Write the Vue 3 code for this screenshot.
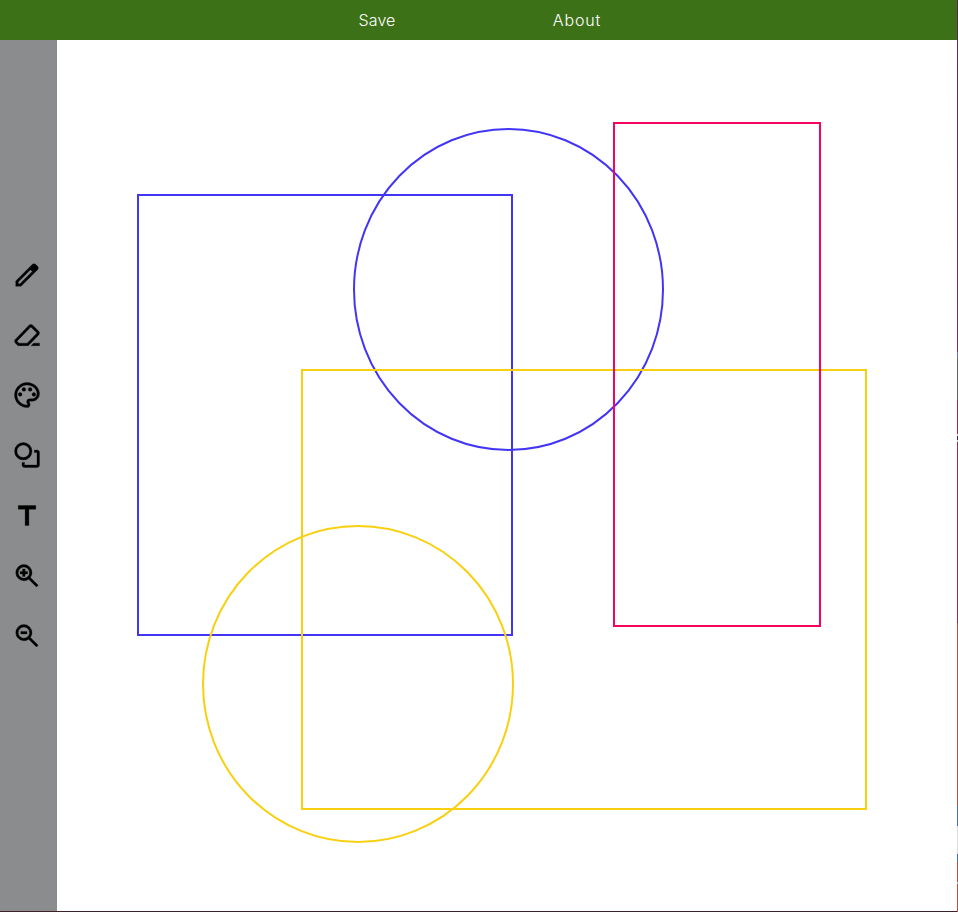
<script setup>
const tools = [
  { name: 'pencil', box: '0 0 24 24', d: 'M5 19h1.425L16.2 9.225 14.775 7.8 5 17.575zm-2 2v-4.25L16.2 3.575q.3-.275.663-.425t.762-.15.775.15.65.45L20.425 5q.3.275.438.65T21 6.4q0 .4-.137.763t-.438.662L7.25 21z' },
  { name: 'eraser', box: '0 -980 960 960', d: 'M690-240h190v80H610l80-80Zm-500 80-85-85q-23-23-23.500-57t22.500-58l440-456q23-24 56.500-24t56.500 23l199 199q23 23 23 57t-23 57L520-160H190Zm296-80 314-322-198-198-442 456 64 64h262Z' },
  { name: 'palette', box: '0 0 24 24', d: 'M12 22C6.49 22 2 17.51 2 12S6.49 2 12 2s10 4.04 10 9c0 3.31-2.69 6-6 6h-1.77c-.28 0-.5.22-.5.5 0 .12.05.23.13.33.41.47.64 1.06.64 1.67A2.5 2.5 0 0 1 12 22zm0-18c-4.41 0-8 3.59-8 8s3.59 8 8 8c.28 0 .5-.22.5-.5a.54.54 0 0 0-.14-.35c-.41-.46-.63-1.05-.63-1.65a2.5 2.5 0 0 1 2.5-2.500H16c2.21 0 4-1.79 4-4 0-3.86-3.59-7-8-7zM5 11.500a1.500 1.500 0 1 0 3 0a1.500 1.500 0 1 0-3 0zM8 7.500a1.500 1.500 0 1 0 3 0a1.500 1.500 0 1 0-3 0zM13 7.500a1.500 1.500 0 1 0 3 0a1.500 1.500 0 1 0-3 0zM16 11.500a1.500 1.500 0 1 0 3 0a1.500 1.500 0 1 0-3 0z' },
  { name: 'shapes', box: '0 0 24 24', d: 'M9 2a7 7 0 1 0 0 14a7 7 0 0 0 0-14zM9 4a5 5 0 1 1 0 10a5 5 0 0 1 0-10zM17.900 8H20q.825 0 1.413.588T22 10v10q0 .825-.587 1.413T20 22H10q-.825 0-1.412-.587T8 20v-2.100h2V20h10V10h-2.100z' },
  { name: 'text', box: '0 -0.4 24 24', d: 'M10.500 20V7H5V4h14v3h-5.500v13z' },
  { name: 'zoom-in', box: '0 -0.6 24 24', d: 'm19.600 21-6.300-6.300A6.100 6.100 0 0 1 9.500 16 6.500 6.500 0 1 1 16 9.500a6.100 6.100 0 0 1-1.300 3.800l6.300 6.300zM9.500 14a4.500 4.500 0 1 0 0-9 4.500 4.500 0 0 0 0 9zM8.500 12.500v-2h-2v-2h2v-2h2v2h2v2h-2v2z' },
  { name: 'zoom-out', box: '0 -0.6 24 24', d: 'm19.600 21-6.300-6.300A6.100 6.100 0 0 1 9.500 16 6.500 6.500 0 1 1 16 9.500a6.100 6.100 0 0 1-1.300 3.800l6.300 6.300zM9.500 14a4.500 4.500 0 1 0 0-9 4.500 4.500 0 0 0 0 9zM7 10.500v-2h5v2z' }
]
</script>

<template>
  <div class="app">
    <div class="window">
      <nav class="menu">
        <a class="menu-item save">Save</a>
        <a class="menu-item about">About</a>
      </nav>
      <div class="workspace">
        <aside class="toolbar">
          <button v-for="tool in tools" :key="tool.name" class="tool">
            <svg class="icon" :viewBox="tool.box"><path fill-rule="evenodd" :d="tool.d" /></svg>
          </button>
        </aside>
        <svg class="canvas" viewBox="57 40 900 871" fill="none" stroke-width="2">
          <rect x="138" y="195" width="374" height="440" stroke="#4335f5" />
          <ellipse cx="508.500" cy="289.500" rx="154.500" ry="160.500" stroke="#4335f5" />
          <rect x="302" y="370" width="564" height="439" stroke="#f9d010" />
          <ellipse cx="358" cy="684" rx="155" ry="158" stroke="#f9d010" />
          <rect x="614" y="123" width="206" height="503" stroke="#f5055f" />
        </svg>
      </div>
    </div>
    <div class="edge"></div>
  </div>
</template>

<style>
body { margin: 0; overflow: hidden; }
</style>

<style scoped>
.app { display: grid; grid-template-columns: 1fr 1px; height: 912px; width: 958px; }
.window { display: flex; flex-direction: column; box-sizing: border-box; border-bottom: 1px solid #3b2227; }
.menu { display: flex; justify-content: center; height: 40px; background: #3d7117; padding-right: 3px; }
.menu-item { width: 200px; line-height: 40px; text-align: center; color: #fff; font-family: Inter, sans-serif; font-size: 16px; font-weight: 350; }
.save { letter-spacing: 0.1px; }
.about { letter-spacing: 0.9px; }
.workspace { display: flex; flex: 1; }
.toolbar { display: flex; flex-direction: column; justify-content: center; box-sizing: border-box; width: 57px; padding: 0 3px 41px 0; background: #8a8c8d; }
.tool { display: flex; align-items: center; justify-content: center; height: 60px; padding: 0; border: 0; background: none; }
.icon { width: 30px; height: 30px; fill: #000; }
.icon path { stroke: #000; stroke-width: 0.3px; vector-effect: non-scaling-stroke; }
.canvas { display: block; width: 900px; height: 871px; background: #fff; }
.edge {
  background: linear-gradient(
    #592554 0, #8f2456 352px, #6b73b5 352px 358px, #646264 358px 400px,
    #a72353 400px 434px, #d8c8d2 434px 436px, #52204f 436px 440px, #d8c8d2 440px 442px,
    #a72353 442px 623px, #c04a3c 623px 806px, #4470ad 806px 826px, #dedede 826px 854px,
    #4470ad 854px 862px, #c04a40 862px 882px, #bdbdc5 882px 884px, #c04a40 884px
  );
}
</style>
